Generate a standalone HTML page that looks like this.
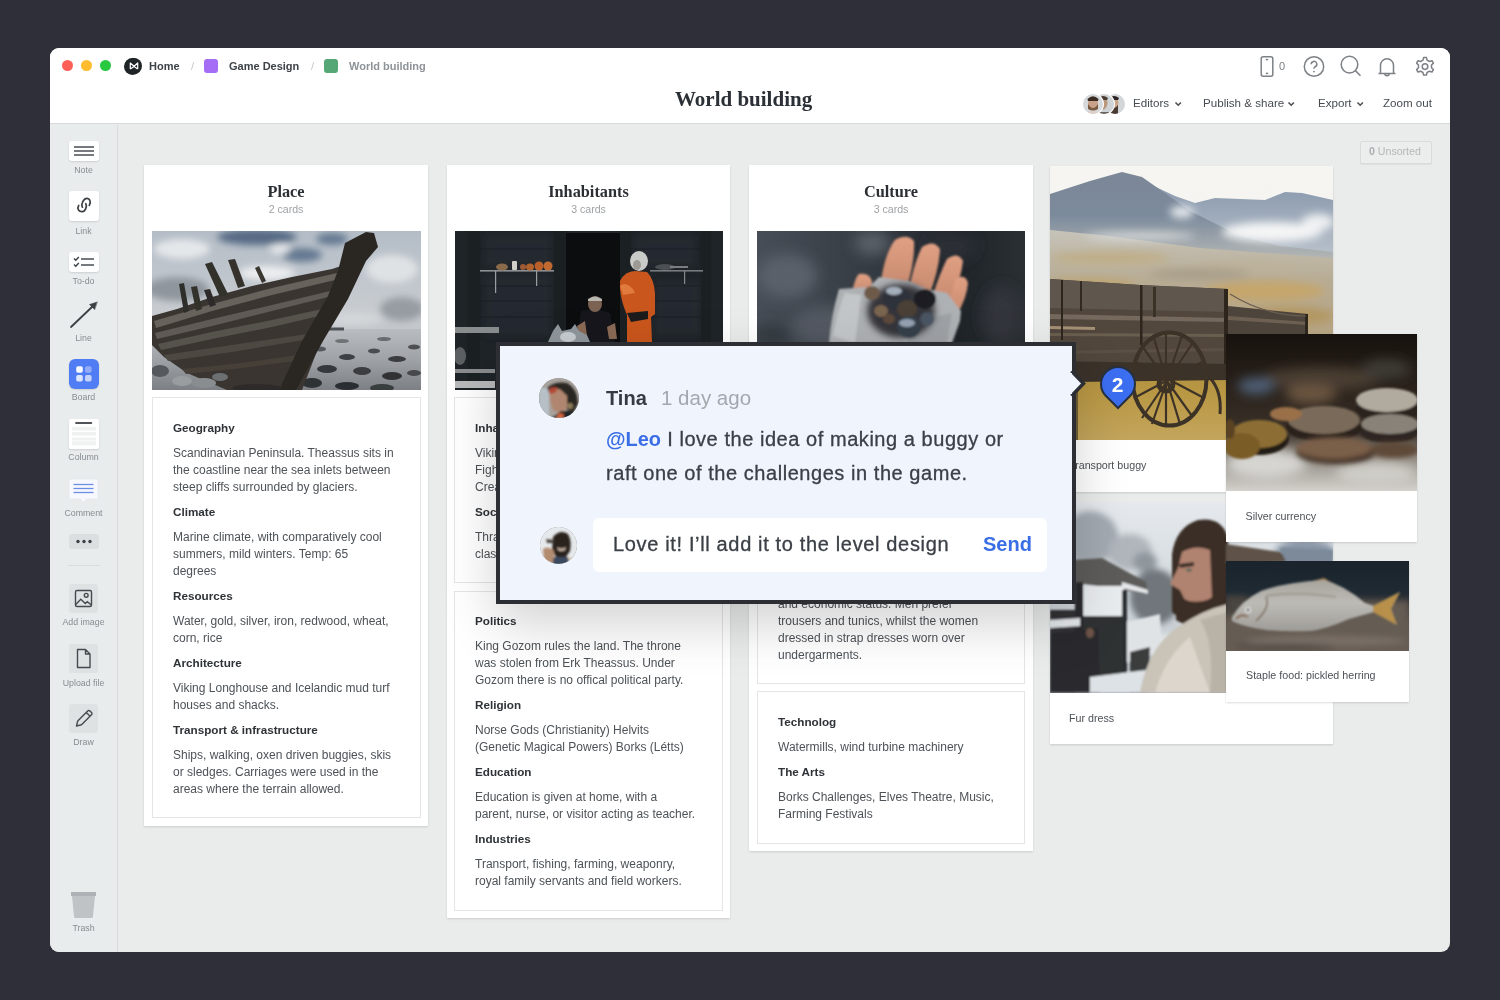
<!DOCTYPE html>
<html><head><meta charset="utf-8">
<style>
*{box-sizing:border-box;margin:0;padding:0}
html,body{width:1500px;height:1000px;overflow:hidden;background:#2e2f38;font-family:"Liberation Sans",sans-serif}
.abs{position:absolute}
#win{position:absolute;left:50px;top:48px;width:1400px;height:904px;border-radius:9px;overflow:hidden;background:#e9eceb}
#hdr{position:absolute;left:0;top:0;width:1400px;height:76px;background:#fff;border-bottom:1px solid #d6d9da}
#side{position:absolute;left:0;top:77px;width:68px;height:827px;background:#e9ecec;border-right:1px solid #d9dcdc}
.crumb{position:absolute;top:12px;font-size:11px;font-weight:700;color:#3d4247;line-height:12px;white-space:nowrap}
.hbtn{position:absolute;top:48px;font-size:11.6px;color:#474c52;line-height:14px;white-space:nowrap}
.lbl{position:absolute;left:0;width:67px;text-align:center;font-size:8.8px;color:#878c91;line-height:10px;white-space:nowrap}
.tile{position:absolute;left:18.5px;width:30px;background:#fff;border-radius:3px;box-shadow:0 1px 2px rgba(0,0,0,.12)}
.gtile{position:absolute;left:19px;width:29px;height:29px;background:#dfe2e3;border-radius:3px}
.col{position:absolute;background:#fff;box-shadow:0 1px 2px rgba(0,0,0,.13)}
.ctitle{position:absolute;left:0;width:100%;text-align:center;font-family:"Liberation Serif",serif;font-weight:700;font-size:16.3px;color:#2b2f33;line-height:18px}
.ccount{position:absolute;left:0;width:100%;text-align:center;font-size:10.6px;color:#9ea2a5;line-height:12px}
.note{position:absolute;background:#fff;border:1px solid #e3e5e6;padding:21px 0 0 20px;overflow:hidden}
.note h4{font-size:11.7px;font-weight:700;color:#2f3337;line-height:17px;margin-bottom:8px;white-space:nowrap}
.note p{position:relative;top:1px;font-size:12px;color:#4d5257;line-height:17px;margin-bottom:8px;white-space:nowrap}
.card{position:absolute;background:#fff;box-shadow:0 1px 2px rgba(0,0,0,.14)}
.cap{position:absolute;font-size:10.7px;color:#4d5257;line-height:12px;white-space:nowrap}
.photo{position:absolute;left:0;top:0;display:block}
</style></head><body>
<div id="root" style="position:absolute;left:0;top:0;width:1500px;height:1000px;will-change:transform">
<div id="win">
  <div id="hdr">
    <!-- traffic lights -->
    <div class="abs" style="left:12px;top:12px;width:11px;height:11px;border-radius:50%;background:#fd5f57"></div>
    <div class="abs" style="left:31px;top:12px;width:11px;height:11px;border-radius:50%;background:#febc2e"></div>
    <div class="abs" style="left:49.5px;top:12px;width:11px;height:11px;border-radius:50%;background:#28c840"></div>
    <!-- breadcrumb -->
    <div class="abs" style="left:74px;top:10px;width:17px;height:17px;border-radius:50%;background:#1f2427"></div>
    <div class="crumb" style="left:99px">Home</div>
    <div class="crumb" style="left:141px;color:#c5c8ca;font-weight:400">/</div>
    <div class="abs" style="left:154px;top:11px;width:14px;height:14px;border-radius:3px;background:#a56cf6"></div>
    <div class="crumb" style="left:179px">Game Design</div>
    <div class="crumb" style="left:261px;color:#c5c8ca;font-weight:400">/</div>
    <div class="abs" style="left:274px;top:11px;width:14px;height:14px;border-radius:3px;background:#55a876"></div>
    <div class="crumb" style="left:299px;color:#8e9397">World building</div>
    <!-- title -->
    <div class="abs" style="left:625px;top:39px;font-family:'Liberation Serif',serif;font-weight:700;font-size:21px;color:#2b3036;line-height:24px;white-space:nowrap">World building</div>
    <!-- right buttons -->
    <div class="hbtn" style="left:1083px">Editors</div>
    <div class="hbtn" style="left:1153px">Publish &amp; share</div>
    <div class="hbtn" style="left:1268px">Export</div>
    <div class="hbtn" style="left:1333px">Zoom out</div>
  </div>
  <div id="side"></div>
  <div id="canvas"></div>
</div>



<!-- ===== HEADER ICONS ===== -->
<svg class="abs" style="left:126px;top:58px" width="16" height="16" viewBox="0 0 16 16"><circle cx="8" cy="8" r="8" fill="#1f2427"/><path d="M4.3 11 V5 L8 8.2 L11.7 5 V11 M4.3 11 L8 8.5 L11.7 11" fill="none" stroke="#fff" stroke-width="1.2" stroke-linejoin="round"/></svg>
<svg class="abs" style="left:1256px;top:54px" width="180" height="26" viewBox="0 0 180 26">
 <g fill="none" stroke="#7d8185" stroke-width="1.5">
  <rect x="5.2" y="2.8" width="11.6" height="19.4" rx="2"/>
  <line x1="9.8" y1="5.6" x2="12.2" y2="5.6"/>
  <line x1="9.8" y1="19.4" x2="12.2" y2="19.4"/>
  <circle cx="58" cy="12.5" r="9.7"/>
  <path d="M55.2 10.2 a2.8 2.8 0 1 1 4 2.5 c-0.9 0.5 -1.2 1 -1.2 2"/>
  <circle cx="93.5" cy="10.6" r="8.3"/>
  <line x1="99.4" y1="16.6" x2="104.5" y2="21.7"/>
  <path d="M124.5 19.5 v-8.2 a6.5 6.5 0 0 1 13 0 v8.2 M122.5 19.5 h17 M128.8 19.5 a2.2 2.2 0 0 0 4.4 0"/>
  <path d="M167.6 3.6 l2.8 0 l0.7 2.6 l2.3 1.3 l2.6 -0.8 l1.4 2.4 l-1.9 1.9 v2.7 l1.9 1.9 l-1.4 2.4 l-2.6 -0.8 l-2.3 1.3 l-0.7 2.6 h-2.8 l-0.7 -2.6 l-2.3 -1.3 l-2.6 0.8 l-1.4 -2.4 l1.9 -1.9 v-2.7 l-1.9 -1.9 l1.4 -2.4 l2.6 0.8 l2.3 -1.3 z" stroke-linejoin="round"/>
  <circle cx="169" cy="12.6" r="2.8"/>
 </g>
 <circle cx="58" cy="17.6" r="0.9" fill="#7d8185"/>
</svg>
<div class="abs" style="left:1279px;top:60px;font-size:11px;color:#7d8185;line-height:12px">0</div>
<!-- avatars -->
<svg class="abs" style="left:1103px;top:92px" width="24" height="24" viewBox="0 0 24 24"><defs><clipPath id="avc3"><circle cx="12" cy="12" r="10"/></clipPath><filter id="avb"><feGaussianBlur stdDeviation="0.6"/></filter></defs><circle cx="12" cy="12" r="11" fill="#fff"/><g clip-path="url(#avc3)"><rect width="24" height="24" fill="#d3d6d8"/><g filter="url(#avb)"><ellipse cx="11" cy="11" rx="4.5" ry="6" fill="#c9a58c"/><path d="M6 6 Q11 2 16 6 L15 8 L7 8 Z" fill="#2a2420"/><path d="M7 13 Q11 19 15 13 L15 22 L7 22 Z" fill="#4a3a30"/></g></g></svg>
<svg class="abs" style="left:1092px;top:92px" width="24" height="24" viewBox="0 0 24 24"><defs><clipPath id="avc2"><circle cx="12" cy="12" r="10"/></clipPath></defs><circle cx="12" cy="12" r="11" fill="#fff"/><g clip-path="url(#avc2)"><rect width="24" height="24" fill="#cfd3d6"/><g filter="url(#avb)"><ellipse cx="11" cy="11" rx="4.5" ry="6.5" fill="#b8977c"/><path d="M6 6 Q11 2 16 6 L15 8 L7 8 Z" fill="#4a3d33"/><path d="M5 20 L17 20 L17 24 L5 24 Z" fill="#6a645c"/></g></g></svg>
<svg class="abs" style="left:1080.5px;top:91.5px" width="24" height="24" viewBox="0 0 24 24"><defs><clipPath id="avc1"><circle cx="12" cy="12" r="10"/></clipPath></defs><circle cx="12" cy="12" r="11" fill="#fff"/><g clip-path="url(#avc1)"><rect width="24" height="24" fill="#d5d9db"/><g filter="url(#avb)"><ellipse cx="12" cy="11.5" rx="5" ry="6.5" fill="#c9a088"/><path d="M6.5 7 Q12 1.5 17.5 7 L17 9 L7 9 Z" fill="#3a2a20"/><path d="M7 12 Q12 20 17 12 L17 17 Q12 20 7 17 Z" fill="#7a5a40"/><path d="M4 21 Q12 17 20 21 L20 24 L4 24 Z" fill="#e0cfc8"/></g></g></svg>
<svg class="abs" style="left:1170px;top:97.5px" width="200" height="12"><g fill="none" stroke="#4a4f54" stroke-width="1.6"><path d="M5.5 4.5 l2.7 2.7 l2.7 -2.7"/><path d="M118.5 4.5 l2.7 2.7 l2.7 -2.7"/><path d="M187.5 4.5 l2.7 2.7 l2.7 -2.7"/></g></svg>
<!-- unsorted -->
<div class="abs" style="left:1360px;top:140.5px;width:72px;height:23px;border:1px solid #d9dcdd;border-radius:2px;background:#eceeee;box-shadow:0 1px 1px rgba(0,0,0,.06)"></div>
<div class="abs" style="left:1369px;top:145px;font-size:10.6px;line-height:12px;color:#b3b7b9;white-space:nowrap"><b style="color:#a9adaf">0</b> Unsorted</div>

<!-- ===== SIDEBAR ===== -->
<div class="tile" style="left:68.5px;top:140.5px;height:20.5px"></div>
<svg class="abs" style="left:68.5px;top:140.5px" width="30" height="21"><g stroke="#3b4045" stroke-width="1.4"><line x1="5" y1="6" x2="25" y2="6"/><line x1="5" y1="10" x2="25" y2="10"/><line x1="5" y1="14" x2="25" y2="14"/></g></svg>
<div class="lbl" style="left:50px;top:165px">Note</div>

<div class="tile" style="left:68.5px;top:191px;height:30px"></div>
<svg class="abs" style="left:68.5px;top:191px" width="30" height="30" viewBox="0 0 30 30"><g fill="none" stroke="#3b4045" stroke-width="1.7" stroke-linecap="round"><path d="M13.4 16.2 C11.8 13 14.5 7.6 17.9 7.4 C20.6 7.3 22.4 10.6 20.3 14.4"/><path d="M16.8 12.7 C18.4 15.2 16.2 20.7 13.3 20.7 C10 20.9 7.6 17.9 9.7 14.5"/></g></svg>
<div class="lbl" style="left:50px;top:226px">Link</div>

<div class="tile" style="left:68.5px;top:252px;height:20px"></div>
<svg class="abs" style="left:68.5px;top:252px" width="30" height="20"><g fill="none" stroke="#3b4045" stroke-width="1.4"><path d="M5 6.5 l1.8 1.8 l3 -3.3"/><path d="M5 12.5 l1.8 1.8 l3 -3.3"/><line x1="12" y1="7" x2="25" y2="7"/><line x1="12" y1="13" x2="25" y2="13"/></g></svg>
<div class="lbl" style="left:50px;top:276px">To-do</div>

<svg class="abs" style="left:66px;top:298px" width="36" height="34"><g stroke="#3b4045" stroke-width="1.8" stroke-linecap="round" fill="#3b4045"><line x1="5" y1="29" x2="27" y2="8"/><path d="M31 4 L23.5 6.5 L28.5 11.5 Z" stroke-width="0.5"/></g></svg>
<div class="lbl" style="left:50px;top:333px">Line</div>

<div class="abs" style="left:69px;top:359px;width:29.5px;height:29.5px;border-radius:6px;background:#507cf4;box-shadow:0 1px 2px rgba(0,0,0,.12)"></div>
<svg class="abs" style="left:69px;top:359px" width="30" height="30"><rect x="7.2" y="7.2" width="6.6" height="6.6" rx="1.8" fill="#f6f9ff"/><rect x="16" y="7.2" width="6.6" height="6.6" rx="1.8" fill="#93abf8"/><rect x="7.2" y="16" width="6.6" height="6.6" rx="1.8" fill="#dde6fd"/><rect x="16" y="16" width="6.6" height="6.6" rx="1.8" fill="#c5d3fb"/></svg>
<div class="lbl" style="left:50px;top:392px">Board</div>

<div class="tile" style="left:69px;top:419px;width:29.5px;height:30px;border-radius:2px"></div>
<svg class="abs" style="left:69px;top:419px" width="30" height="30"><rect x="6.2" y="3" width="17" height="2" rx="0.8" fill="#505458"/><rect x="3" y="8" width="24" height="3.6" fill="#f0f1f1"/><rect x="3" y="13" width="24" height="3.6" fill="#f0f1f1"/><rect x="3" y="18.6" width="24" height="2.8" fill="#f0f1f1"/><rect x="3" y="22.2" width="24" height="4" fill="#f0f1f1"/></svg>
<div class="lbl" style="left:50px;top:452px">Column</div>

<svg class="abs" style="left:67px;top:476px" width="33" height="30"><path d="M3.5 3 h26 a1.5 1.5 0 0 1 1.5 1.5 v17 a1.5 1.5 0 0 1 -1.5 1.5 h-10 l-3 3.5 l-3 -3.5 h-10 a1.5 1.5 0 0 1 -1.5 -1.5 v-17 a1.5 1.5 0 0 1 1.5 -1.5z" fill="#f6f8fd" stroke="#e1e4e8" stroke-width="0.6"/><g stroke="#6d8ee6" stroke-width="1.3"><line x1="6.5" y1="8.5" x2="26.5" y2="8.5"/><line x1="6.5" y1="12.5" x2="26.5" y2="12.5"/><line x1="6.5" y1="16.5" x2="26.5" y2="16.5"/></g></svg>
<div class="lbl" style="left:50px;top:508px">Comment</div>

<div class="abs" style="left:68.5px;top:533.5px;width:30px;height:15px;border-radius:3px;background:#dcdfe0"></div>
<svg class="abs" style="left:68.5px;top:533.5px" width="30" height="15"><g fill="#3b4045"><circle cx="9" cy="7.5" r="1.7"/><circle cx="15" cy="7.5" r="1.7"/><circle cx="21" cy="7.5" r="1.7"/></g></svg>

<div class="abs" style="left:68px;top:565px;width:32px;height:1px;background:#dadddd"></div>

<div class="gtile" style="left:69px;top:583.5px"></div>
<svg class="abs" style="left:69px;top:583.5px" width="29" height="29"><g fill="none" stroke="#454a4f" stroke-width="1.4"><rect x="6.5" y="6.5" width="16" height="16" rx="1.5"/><circle cx="17.2" cy="11.3" r="1.9"/><path d="M6.8 20.5 l5 -5.2 l4.5 4.2 l2 -1.8 l4 3.3"/></g></svg>
<div class="lbl" style="left:50px;top:617px">Add image</div>

<div class="gtile" style="left:69px;top:643.5px"></div>
<svg class="abs" style="left:69px;top:643.5px" width="29" height="29"><path d="M8.5 5.5 h8 l4.5 4.5 v13.5 h-12.5 z M16.5 5.5 v4.5 h4.5" fill="none" stroke="#454a4f" stroke-width="1.4" stroke-linejoin="round"/></svg>
<div class="lbl" style="left:50px;top:678px">Upload file</div>

<div class="gtile" style="left:69px;top:704px"></div>
<svg class="abs" style="left:69px;top:704px" width="29" height="29"><path d="M7.5 22 l1.2 -5 l10 -10 a1.6 1.6 0 0 1 2.3 0 l1.5 1.5 a1.6 1.6 0 0 1 0 2.3 l-10 10 z M17.3 8.5 l3.5 3.5" fill="none" stroke="#454a4f" stroke-width="1.4" stroke-linejoin="round"/></svg>
<div class="lbl" style="left:50px;top:737px">Draw</div>

<svg class="abs" style="left:69px;top:890px" width="29" height="29"><path d="M2 2 h25 v4 h-25z" fill="#aeb2b5"/><path d="M3 6 h23 l-2 20.5 a1.5 1.5 0 0 1 -1.5 1.5 h-16 a1.5 1.5 0 0 1 -1.5 -1.5z" fill="#bfc3c6"/></svg>
<div class="lbl" style="left:50px;top:923px">Trash</div>

<!-- ===== COLUMNS ===== -->
<div class="col" style="left:144px;top:165px;width:284px;height:661px">
  <div class="ctitle" style="top:17.5px">Place</div>
  <div class="ccount" style="top:37.5px">2 cards</div>
</div>
<div class="col" style="left:447px;top:165px;width:283px;height:753px">
  <div class="ctitle" style="top:17.5px">Inhabitants</div>
  <div class="ccount" style="top:37.5px">3 cards</div>
</div>
<div class="col" style="left:749px;top:165px;width:284px;height:686px">
  <div class="ctitle" style="top:17.5px">Culture</div>
  <div class="ccount" style="top:37.5px">3 cards</div>
</div>

<div id="img-place" class="abs" style="left:152px;top:231px;width:269px;height:159px;background:#777"><svg width="269" height="159" viewBox="0 0 269 159" style="display:block">
<defs>
<linearGradient id="pSky" x1="0" y1="0" x2="0" y2="1"><stop offset="0" stop-color="#b4bdc7"/><stop offset="0.5" stop-color="#c8ccd0"/><stop offset="1" stop-color="#b3b7bb"/></linearGradient>
<linearGradient id="pSea" x1="0" y1="0" x2="0" y2="1"><stop offset="0" stop-color="#b9bdc1"/><stop offset="0.5" stop-color="#9fa3a7"/><stop offset="1" stop-color="#7c8084"/></linearGradient>
<filter id="pB1" x="-30%" y="-30%" width="160%" height="160%"><feGaussianBlur stdDeviation="3.5"/></filter>
<filter id="pB2"><feGaussianBlur stdDeviation="0.7"/></filter>
</defs>
<rect width="269" height="159" fill="url(#pSky)"/>
<g filter="url(#pB1)">
 <ellipse cx="105" cy="6" rx="40" ry="8" fill="#566a84"/>
 <ellipse cx="150" cy="24" rx="20" ry="7" fill="#647891"/>
 <ellipse cx="180" cy="8" rx="16" ry="6" fill="#647891"/>
 <ellipse cx="128" cy="18" rx="10" ry="5" fill="#e8ebee"/>
 <ellipse cx="30" cy="18" rx="28" ry="10" fill="#e4e7ea"/>
 <ellipse cx="115" cy="42" rx="28" ry="7" fill="#eceef0"/>
 <ellipse cx="240" cy="38" rx="26" ry="14" fill="#dfe2e5"/>
 <ellipse cx="25" cy="58" rx="32" ry="12" fill="#8f969d"/>
 <ellipse cx="250" cy="78" rx="22" ry="12" fill="#969ca2"/>
 <ellipse cx="200" cy="88" rx="30" ry="6" fill="#d4d7da"/>
</g>
<rect x="0" y="98" width="269" height="61" fill="url(#pSea)"/>
<rect x="172" y="96.5" width="20" height="3" fill="#4f5356"/>
<g filter="url(#pB2)">
 <ellipse cx="168" cy="118" rx="6" ry="2.5" fill="#55585b"/>
 <ellipse cx="195" cy="126" rx="8" ry="3" fill="#3d4044"/>
 <ellipse cx="222" cy="120" rx="6" ry="2.5" fill="#4a4d50"/>
 <ellipse cx="245" cy="128" rx="9" ry="3" fill="#3a3d40"/>
 <ellipse cx="262" cy="116" rx="6" ry="2.5" fill="#4d5053"/>
 <ellipse cx="175" cy="138" rx="10" ry="4" fill="#36393c"/>
 <ellipse cx="210" cy="140" rx="9" ry="4" fill="#3b3e41"/>
 <ellipse cx="240" cy="145" rx="10" ry="4" fill="#303336"/>
 <ellipse cx="262" cy="142" rx="7" ry="3" fill="#45484b"/>
 <ellipse cx="160" cy="152" rx="10" ry="5" fill="#2f3235"/>
 <ellipse cx="195" cy="155" rx="12" ry="4" fill="#2c2f31"/>
 <ellipse cx="230" cy="157" rx="12" ry="4" fill="#393c3e"/>
 <ellipse cx="155" cy="130" rx="5" ry="2" fill="#4a4d50"/>
 <ellipse cx="232" cy="108" rx="7" ry="2" fill="#6a6d70"/>
 <ellipse cx="190" cy="110" rx="7" ry="2" fill="#707376"/>
</g>
<!-- hull -->
<g filter="url(#pB2)">
 <path d="M0 85 L25 78 L60 66 L100 55 L140 46 L180 38 L198 32 L206 40 L190 75 L165 120 L150 159 L75 159 L35 142 L12 126 L0 114 Z" fill="#3a3632"/>
 <path d="M2 90 L60 73 L120 57 L185 42 L183 49 L120 64 L60 80 L4 97 Z" fill="#67625c"/>
 <path d="M3 102 L60 88 L120 74 L178 60 L176 66 L120 80 L60 95 L5 108 Z" fill="#5f5a55"/>
 <path d="M6 113 L60 101 L120 89 L170 78 L167 85 L120 96 L60 108 L9 119 Z" fill="#57524d"/>
 <path d="M12 124 L80 114 L155 103 L152 109 L80 121 L16 130 Z" fill="#4d4843"/>
 <path d="M30 138 L90 132 L145 124 L143 130 L90 137 L34 143 Z" fill="#463f39"/>
 <!-- ribs -->
 <path d="M27 53 L32 52 L37 80 L32 82 Z" fill="#2f2d2a"/>
 <path d="M39 56 L45 55 L50 78 L44 80 Z" fill="#33302c"/>
 <path d="M52 59 L58 58 L64 74 L58 76 Z" fill="#2f2c29"/>
 <path d="M53 33 L60 31 L76 63 L68 66 Z" fill="#33302c"/>
 <path d="M76 29 L83 28 L93 55 L86 57 Z" fill="#35322e"/>
 <path d="M103 37 L107 35 L114 50 L110 52 Z" fill="#3a3733"/>
 <!-- bow post -->
 <path d="M193 12 L214 1 L222 2 L226 16 L214 30 L196 68 L171 110 L144 159 L127 159 L150 110 L176 65 L186 40 Z" fill="#2a2724"/>
</g>
<g filter="url(#pB2)">
 <ellipse cx="30" cy="150" rx="10" ry="5" fill="#9a9da0"/>
 <ellipse cx="52" cy="152" rx="12" ry="5" fill="#8a8d90"/>
 <ellipse cx="68" cy="146" rx="8" ry="4" fill="#6d7073"/>
 <ellipse cx="8" cy="140" rx="9" ry="6" fill="#55585b"/>
 <ellipse cx="105" cy="157" rx="25" ry="4" fill="#2e2c2a"/>
</g>
</svg>
</div>
<div id="img-inhab" class="abs" style="left:455px;top:231px;width:268px;height:159px;background:#222"><svg width="268" height="159" viewBox="0 0 268 159" style="display:block">
<defs>
<filter id="iB1"><feGaussianBlur stdDeviation="0.7"/></filter>
<filter id="iB2" x="-30%" y="-30%" width="160%" height="160%"><feGaussianBlur stdDeviation="3"/></filter>
</defs>
<rect width="268" height="159" fill="#1e2428"/>
<g filter="url(#iB2)" opacity="0.8">
 <rect x="30" y="5" width="65" height="30" fill="#262c31"/>
 <rect x="30" y="45" width="65" height="60" fill="#252b30"/>
 <rect x="180" y="5" width="60" height="30" fill="#262c31"/>
 <rect x="200" y="50" width="45" height="55" fill="#262c30"/>
</g>
<g stroke="#1a1f22" stroke-width="1.2" opacity="0.9">
 <line x1="25" y1="18" x2="98" y2="18"/><line x1="25" y1="55" x2="98" y2="55"/><line x1="25" y1="70" x2="98" y2="70"/><line x1="25" y1="86" x2="98" y2="86"/>
 <line x1="176" y1="18" x2="246" y2="18"/><line x1="196" y1="55" x2="246" y2="55"/><line x1="196" y1="70" x2="246" y2="70"/><line x1="196" y1="86" x2="246" y2="86"/>
</g>
<rect x="12" y="0" width="13" height="159" fill="#1b2023"/>
<rect x="99" y="0" width="12" height="111" fill="#1a1f22"/>
<rect x="165" y="0" width="11" height="111" fill="#1b2023"/>
<rect x="246" y="0" width="10" height="111" fill="#1b2023"/>
<rect x="111" y="2" width="54" height="109" fill="#0b0d0f"/>
<!-- shelves -->
<rect x="25" y="39" width="74" height="1.6" fill="#8d9194"/>
<rect x="40" y="40" width="1.2" height="22" fill="#9a9ea1"/>
<rect x="81" y="40" width="1.2" height="15" fill="#9a9ea1"/>
<rect x="195" y="39" width="53" height="1.6" fill="#777b7e"/>
<rect x="229" y="40" width="1.2" height="13" fill="#85898c"/>
<g filter="url(#iB1)">
 <ellipse cx="47" cy="36" rx="6" ry="3.5" fill="#8b6a4c"/>
 <rect x="57" y="30" width="5" height="9" rx="1" fill="#cfcfc8"/>
 <ellipse cx="68" cy="36" rx="3" ry="3" fill="#9c5a36"/>
 <ellipse cx="75" cy="36" rx="4" ry="3.5" fill="#b0622e"/>
 <ellipse cx="84" cy="35" rx="4.5" ry="4.5" fill="#b85f2a"/>
 <ellipse cx="93" cy="35" rx="4.5" ry="4.5" fill="#c06a32"/>
 <ellipse cx="210" cy="36" rx="10" ry="3" fill="#4a4f53"/>
 <rect x="215" y="35" width="18" height="2" fill="#7b7f82"/>
</g>
<!-- table bottom left -->
<rect x="0" y="96" width="44" height="6" fill="#8a8d8e" filter="url(#iB1)"/>
<rect x="0" y="138" width="40" height="4" fill="#8a8c8d" filter="url(#iB1)"/>
<rect x="0" y="150" width="40" height="7" fill="#b8babb" filter="url(#iB1)"/>
<ellipse cx="5" cy="125" rx="6" ry="9" fill="#5d6164" filter="url(#iB1)"/>
<!-- man sitting -->
<g filter="url(#iB1)">
 <path d="M126 80 Q140 76 155 82 L160 111 L122 111 Z" fill="#15181a"/>
 <ellipse cx="140" cy="73" rx="7" ry="8" fill="#7b6253"/>
 <path d="M133 68 Q140 63 147 68 L147 70 L133 70 Z" fill="#b9b6b0"/>
 <path d="M122 95 L130 90 L132 105 L125 108 Z" fill="#8a6a55"/>
 <path d="M152 96 L160 92 L162 108 L154 108 Z" fill="#8a6a55"/>
 <!-- dog -->
 <path d="M93 111 L98 100 L103 93 L107 100 L116 98 L120 93 L124 100 L132 104 L135 111 Z" fill="#8f969c"/>
 <ellipse cx="113" cy="106" rx="8" ry="5" fill="#c7ccd0"/>
 <!-- orange figure -->
 <path d="M165 50 Q170 40 180 40 L192 41 Q199 48 200 62 L200 83 L196 86 L197 111 L172 111 L172 84 Q166 70 165 58 Z" fill="#c9561f"/>
 <path d="M165 55 Q170 50 178 58 L180 62 L168 64 Z" fill="#e07a3c"/>
 <ellipse cx="184" cy="30" rx="9" ry="10" fill="#c9cbc9"/>
 <ellipse cx="182" cy="34" rx="4" ry="5" fill="#9d9a94"/>
 <path d="M172 82 L193 80 L193 88 L176 91 Z" fill="#1b1d1f"/>
</g>
</svg>
</div>
<div id="img-cult" class="abs" style="left:757px;top:231px;width:268px;height:159px;background:#333"><svg width="268" height="159" viewBox="0 0 268 159" style="display:block">
<defs>
<linearGradient id="cBg" x1="0" y1="0" x2="1" y2="0"><stop offset="0" stop-color="#474e57"/><stop offset="0.45" stop-color="#343a42"/><stop offset="0.75" stop-color="#1f2429"/><stop offset="1" stop-color="#2a2f34"/></linearGradient>
<filter id="cB1" x="-50%" y="-50%" width="200%" height="200%"><feGaussianBlur stdDeviation="7"/></filter>
<filter id="cB3" x="-30%" y="-30%" width="160%" height="160%"><feGaussianBlur stdDeviation="3"/></filter>
<filter id="cB2"><feGaussianBlur stdDeviation="0.9"/></filter>
<linearGradient id="cSkin" x1="0" y1="0" x2="0" y2="1"><stop offset="0" stop-color="#e0a084"/><stop offset="1" stop-color="#c78a6e"/></linearGradient>
</defs>
<rect width="268" height="159" fill="url(#cBg)"/>
<g filter="url(#cB1)">
 <ellipse cx="30" cy="45" rx="30" ry="22" fill="#5a616a"/>
 <ellipse cx="65" cy="95" rx="30" ry="20" fill="#525962"/>
 <ellipse cx="15" cy="105" rx="20" ry="12" fill="#343a41"/>
 <ellipse cx="115" cy="12" rx="18" ry="12" fill="#5a6066"/>
 <ellipse cx="195" cy="15" rx="25" ry="15" fill="#2a2f34"/>
 <ellipse cx="245" cy="85" rx="20" ry="30" fill="#30353a"/>
</g>
<g filter="url(#cB2)">
 <!-- fingers -->
 <path d="M124 50 Q128 22 138 9 Q150 2 157 10 Q158 30 150 56 Z" fill="url(#cSkin)"/>
 <path d="M152 58 Q157 32 165 16 Q177 8 183 18 Q182 40 172 64 Z" fill="url(#cSkin)"/>
 <path d="M176 64 Q182 44 190 28 Q201 20 206 30 Q204 50 192 72 Z" fill="url(#cSkin)"/>
 <path d="M190 80 Q194 62 199 48 Q208 42 211 52 Q210 66 200 84 Z" fill="url(#cSkin)"/>
 <path d="M95 62 Q98 46 102 43 Q112 41 115 50 L114 62 Z" fill="url(#cSkin)"/>
 <!-- glove -->
 <path d="M72 112 Q74 85 82 58 L112 56 L122 46 L152 50 L170 58 L190 62 L204 80 L203 90 L195 112 Z" fill="#aeb1b4"/>
 <path d="M76 105 Q82 75 88 62 L104 64 L98 112 Z" fill="#c3c6c9"/>
 <path d="M160 90 L195 82 L190 112 L150 112 Z" fill="#9ea2a6"/>
 <!-- stones -->
 <ellipse cx="144" cy="80" rx="34" ry="27" fill="#34363b" filter="url(#cB3)"/>
 <ellipse cx="115" cy="62" rx="8" ry="7" fill="#6e5a48"/>
 <ellipse cx="124" cy="80" rx="7" ry="6" fill="#7a6550"/>
 <ellipse cx="140" cy="68" rx="14" ry="11" fill="#2d333b"/>
 <ellipse cx="137" cy="60" rx="8" ry="4" fill="#a4afbc"/>
 <ellipse cx="150" cy="78" rx="10" ry="9" fill="#4c3f36"/>
 <ellipse cx="168" cy="68" rx="11" ry="10" fill="#1a1e23"/>
 <ellipse cx="152" cy="96" rx="12" ry="11" fill="#36404c"/>
 <ellipse cx="150" cy="92" rx="8" ry="4" fill="#94a2b2"/>
 <ellipse cx="170" cy="88" rx="7" ry="7" fill="#4a5462"/>
 <ellipse cx="132" cy="88" rx="6" ry="5" fill="#5d4a3a"/>
</g>
</svg>
</div>

<div class="note" style="left:152px;top:397px;width:269px;height:421px">
  <h4>Geography</h4>
  <p>Scandinavian Peninsula. Theassus sits in<br>the coastline near the sea inlets between<br>steep cliffs surrounded by glaciers.</p>
  <h4>Climate</h4>
  <p>Marine climate, with comparatively cool<br>summers, mild winters. Temp: 65<br>degrees</p>
  <h4>Resources</h4>
  <p>Water, gold, silver, iron, redwood, wheat,<br>corn, rice</p>
  <h4>Architecture</h4>
  <p>Viking Longhouse and Icelandic mud turf<br>houses and shacks.</p>
  <h4>Transport &amp; infrastructure</h4>
  <p>Ships, walking, oxen driven buggies, skis<br>or sledges. Carriages were used in the<br>areas where the terrain allowed.</p>
</div>
<div class="note" style="left:454px;top:397px;width:269px;height:186px">
  <h4>Inhabitants</h4>
  <p>Vikings, Seafarers, Traders<br>Fighters, Raiders, Explorers<br>Creatures and Elves</p>
  <h4>Social classes</h4>
  <p>Thralls, Karls and Jarls form the social<br>classes of the land</p>
</div>
<div class="note" style="left:454px;top:591px;width:269px;height:320px;padding-top:20px">
  <h4>Politics</h4>
  <p>King Gozom rules the land. The throne<br>was stolen from Erk Theassus. Under<br>Gozom there is no offical political party.</p>
  <h4>Religion</h4>
  <p>Norse Gods (Christianity) Helvits<br>(Genetic Magical Powers) Borks (Létts)</p>
  <h4>Education</h4>
  <p>Education is given at home, with a<br>parent, nurse, or visitor acting as teacher.</p>
  <h4>Industries</h4>
  <p>Transport, fishing, farming, weaponry,<br>royal family servants and field workers.</p>
</div>
<div class="note" style="left:757px;top:397px;width:268px;height:287px;padding-top:20px">
  <h4>Clothing</h4>
  <p>Clothing was made from wool, linen and<br>animal skins, with furs for warmth.</p>
  <h4>Fashion</h4>
  <p>Dress is determined by social class<br>and wealth. Jewellery shows rank<br>and social standing, along with<br>furs, textiles and embroidery that<br>signalled a certain wealth, class<br>and economic status. Men prefer<br>trousers and tunics, whilst the women<br>dressed in strap dresses worn over<br>undergarments.</p>
</div>
<div class="note" style="left:757px;top:691px;width:268px;height:153px">
  <h4>Technolog</h4>
  <p>Watermills, wind turbine machinery</p>
  <h4>The Arts</h4>
  <p>Borks Challenges, Elves Theatre, Music,<br>Farming Festivals</p>
</div>


<!-- ===== RIGHT CARDS ===== -->
<div class="card" style="left:1050px;top:166px;width:283px;height:326px">
  <div id="img-buggy" class="abs" style="left:0;top:0;width:283px;height:274px;background:#a99"><svg width="283" height="274" viewBox="0 0 283 274" style="display:block">
<defs>
<linearGradient id="bSky" x1="0" y1="0" x2="0" y2="1"><stop offset="0" stop-color="#f6f5f1"/><stop offset="1" stop-color="#eef0f0"/></linearGradient>
<linearGradient id="bM1" x1="0" y1="0" x2="0" y2="1"><stop offset="0" stop-color="#7c8797"/><stop offset="0.5" stop-color="#7b8a9c"/><stop offset="1" stop-color="#b3b6b4"/></linearGradient>
<linearGradient id="bM2" x1="0" y1="0" x2="0" y2="1"><stop offset="0" stop-color="#8797ac"/><stop offset="1" stop-color="#b7c0ca"/></linearGradient>
<linearGradient id="bValley" x1="0" y1="0" x2="0" y2="1"><stop offset="0" stop-color="#c8c6be"/><stop offset="0.25" stop-color="#b8ad96"/><stop offset="0.6" stop-color="#b39f7a"/><stop offset="1" stop-color="#a89270"/></linearGradient>
<linearGradient id="bGrass" x1="0" y1="0" x2="0" y2="1"><stop offset="0" stop-color="#a98a3c"/><stop offset="0.5" stop-color="#b99844"/><stop offset="1" stop-color="#c3a55c"/></linearGradient>
<filter id="bB1" x="-30%" y="-30%" width="160%" height="160%"><feGaussianBlur stdDeviation="4"/></filter>
<filter id="bB2"><feGaussianBlur stdDeviation="0.7"/></filter>
</defs>
<rect width="283" height="274" fill="url(#bSky)"/>
<rect x="0" y="58" width="283" height="216" fill="url(#bValley)"/>
<g filter="url(#bB1)">
 <ellipse cx="60" cy="92" rx="60" ry="6" fill="#bfae86"/>
 <ellipse cx="40" cy="120" rx="45" ry="7" fill="#c0a46e"/>
 <ellipse cx="150" cy="108" rx="50" ry="5" fill="#a69c88"/>
 <ellipse cx="215" cy="125" rx="60" ry="10" fill="#c5a66c"/>
 <ellipse cx="240" cy="150" rx="45" ry="9" fill="#b39762"/>
 <ellipse cx="120" cy="140" rx="50" ry="6" fill="#ad9a78"/>
 <ellipse cx="200" cy="100" rx="50" ry="4" fill="#bdb29a"/>
</g>
<path d="M95 16 L125 30 L145 37 L165 32 L190 33 L215 34 L235 26 L252 27 L283 34 L283 88 L230 80 L170 66 L120 44 Z" fill="url(#bM2)"/>
<path d="M0 28 L40 15 L72 6 L92 11 L112 25 L140 45 L190 70 L230 80 L283 86 L283 92 L150 82 L60 70 L0 64 Z" fill="url(#bM1)"/>
<g filter="url(#bB1)">
 <ellipse cx="222" cy="66" rx="50" ry="10" fill="#f4f5f5"/>
 <ellipse cx="132" cy="46" rx="12" ry="6" fill="#e8ebee"/>
 <ellipse cx="268" cy="56" rx="16" ry="8" fill="#eef0f2"/>
 <ellipse cx="90" cy="70" rx="55" ry="4" fill="#d5d8d8"/>
</g>
<rect x="0" y="180" width="283" height="94" fill="url(#bGrass)"/>
<g filter="url(#bB2)">
 <!-- wagon box -->
 <path d="M0 113 L90 119 L178 123 L178 212 L30 212 L0 205 Z" fill="#51473e"/>
 <path d="M0 113 L90 119 L178 123 L178 146 L0 142 Z" fill="#5e564e"/>
 <path d="M0 148 L178 152 L178 156 L0 153 Z" fill="#74685b"/>
 <path d="M0 160 L45 161 L45 164 L0 163 Z" fill="#a58f74"/>
 <path d="M0 167 L178 168 L178 171 L0 170 Z" fill="#6a5e50"/>
 <path d="M0 185 L178 182 L178 185 L0 188 Z" fill="#5c5045"/>
 <path d="M178 140 L258 148 L256 212 L178 212 Z" fill="#4e443b"/>
 <path d="M178 150 L258 156 L258 159 L178 154 Z" fill="#6d6153"/>
 <rect x="11" y="114" width="2" height="60" fill="#2f271f"/>
 <rect x="30" y="115" width="2" height="30" fill="#332a22"/>
 <rect x="90" y="119" width="2.5" height="60" fill="#2f271f"/>
 <rect x="103" y="121" width="3" height="30" fill="#3a3027"/>
 <rect x="174" y="123" width="4" height="90" fill="#2f271f"/>
 <rect x="255" y="148" width="3" height="60" fill="#2f271f"/>
 <path d="M0 195 L178 198 L178 214 L25 216 L0 212 Z" fill="#3b322a"/>
 <path d="M0 205 L28 210 L28 274 L0 274 Z" fill="#6e5c34"/>
</g>
<g fill="none" stroke="#3d3128" filter="url(#bB2)">
 <ellipse cx="119.5" cy="213" rx="37" ry="46.5" stroke-width="4"/>
 <circle cx="116" cy="218" r="7" stroke-width="5"/>
 <g stroke-width="2.2">
  <line x1="116" y1="167" x2="116" y2="259"/><line x1="83" y1="213" x2="156" y2="213"/>
  <line x1="92" y1="180" x2="142" y2="250"/><line x1="142" y1="178" x2="92" y2="252"/>
  <line x1="103" y1="169" x2="130" y2="258"/><line x1="132" y1="170" x2="102" y2="258"/>
  <line x1="84" y1="195" x2="154" y2="232"/><line x1="84" y1="232" x2="154" y2="195"/>
 </g>
 <path d="M160 212 Q172 225 170 248" stroke-width="3"/>
</g>
<path d="M180 128 Q215 150 256 150" fill="none" stroke="#6a5d50" stroke-width="1.2"/>
</svg>
</div>
  <div class="cap" style="left:19px;top:293px">Transport buggy</div>
</div>
<div class="card" style="left:1050px;top:502px;width:283px;height:241.5px">
  <div id="img-fur" class="abs" style="left:0;top:0;width:283px;height:190.5px;background:#889"><svg width="283" height="190.5" viewBox="0 0 283 190.5" style="display:block">
<defs>
<linearGradient id="fSky" x1="0" y1="0" x2="0" y2="1"><stop offset="0" stop-color="#e6eaee"/><stop offset="0.45" stop-color="#d3d9de"/><stop offset="1" stop-color="#b9c0c6"/></linearGradient>
<filter id="fB1" x="-30%" y="-30%" width="160%" height="160%"><feGaussianBlur stdDeviation="3"/></filter>
<filter id="fB2"><feGaussianBlur stdDeviation="0.9"/></filter>
</defs>
<rect width="283" height="190.5" fill="url(#fSky)"/>
<g filter="url(#fB1)">
 <ellipse cx="40" cy="35" rx="28" ry="26" fill="#a3aab1"/>
 <ellipse cx="80" cy="50" rx="22" ry="18" fill="#b0b6bc"/>
 <ellipse cx="105" cy="95" rx="25" ry="28" fill="#6f767c"/>
 <ellipse cx="18" cy="70" rx="18" ry="12" fill="#98a0a6"/>
 <ellipse cx="95" cy="60" rx="12" ry="10" fill="#8f969c"/>
 <ellipse cx="255" cy="50" rx="30" ry="12" fill="#8795a5"/>
 <ellipse cx="110" cy="140" rx="18" ry="8" fill="#e4e8eb"/>
</g>
<g filter="url(#fB2)">
 <!-- hut -->
 <path d="M22 58 L52 56 L96 80 L98 92 L22 80 Z" fill="#5d5c5a"/>
 <path d="M72 80 L98 88 L98 92 L72 86 Z" fill="#e5e8ea"/>
 <rect x="34" y="84" width="40" height="30" fill="#e9ecee"/>
 <rect x="25" y="80" width="8" height="100" fill="#2a2c2e"/>
 <rect x="72" y="88" width="5" height="92" fill="#2c2e30"/>
 <rect x="33" y="114" width="40" height="66" fill="#2f3133"/>
 <path d="M0 108 L25 108 L25 190.5 L0 190.5 Z" fill="#303335"/>
 <path d="M0 118 L30 116 L30 124 L0 126 Z" fill="#e3e7ea"/>
 <path d="M0 132 L48 126 L50 190.5 L0 190.5 Z" fill="#2a2c2d"/>
 <ellipse cx="40" cy="131" rx="4" ry="5" fill="#6e5448"/>
 <path d="M77 120 L110 112 L112 150 L77 160 Z" fill="#dfe3e6"/>
 <path d="M80 150 L100 145 L98 190.5 L80 190.5 Z" fill="#3a3c3d"/>
 <path d="M40 175 L120 165 L120 190.5 L40 190.5 Z" fill="#dde2e6"/>
 <!-- hair back -->
 <path d="M122 52 Q126 25 148 18 Q172 14 178 36 L178 128 L140 125 L122 110 Z" fill="#3a2f28"/>
 <path d="M176 42 L230 50 L240 60 L176 62 Z" fill="#5e5248"/>
 <path d="M230 46 L283 48 L283 60 L236 60 Z" fill="#7c8a9a"/>
 <!-- face -->
 <path d="M132 50 Q146 42 160 48 L162 95 Q150 106 136 100 L130 88 L120 82 L124 74 L128 66 Z" fill="#b08270"/>
 <path d="M129 62 L144 60 L144 64 L130 66 Z" fill="#3e3029"/>
 <ellipse cx="139" cy="68" rx="3" ry="1.5" fill="#5a6b5c"/>
 <!-- beard -->
 <path d="M126 90 Q138 106 162 96 L170 120 L148 130 L126 118 Z" fill="#3b2d25"/>
 <!-- fur coat -->
 <path d="M90 190.5 Q98 145 128 125 Q152 108 178 102 L178 190.5 Z" fill="#c9c3b8"/>
 <path d="M105 190.5 Q115 155 140 135 L160 190.5 Z" fill="#dcd6cc"/>
 <path d="M150 118 Q165 140 160 190.5 L178 190.5 L178 110 Z" fill="#b9b2a6"/>
</g>
</svg>
</div>
  <div class="cap" style="left:19px;top:210px">Fur dress</div>
</div>
<div class="card" style="left:1226px;top:334px;width:191px;height:207.5px">
  <div id="img-coins" class="abs" style="left:0;top:0;width:191px;height:157px;background:#443"><svg width="191" height="157" viewBox="0 0 191 157" style="display:block">
<defs>
<linearGradient id="kBg" x1="0" y1="0" x2="0" y2="1"><stop offset="0" stop-color="#17120e"/><stop offset="0.35" stop-color="#2a221b"/><stop offset="0.62" stop-color="#3a3129"/><stop offset="0.78" stop-color="#8d877e"/><stop offset="1" stop-color="#d4d2cd"/></linearGradient>
<filter id="kB1" x="-50%" y="-50%" width="200%" height="200%"><feGaussianBlur stdDeviation="6"/></filter>
<filter id="kB2" x="-20%" y="-20%" width="140%" height="140%"><feGaussianBlur stdDeviation="1.2"/></filter>
<filter id="kB3" x="-30%" y="-30%" width="160%" height="160%"><feGaussianBlur stdDeviation="2.5"/></filter>
</defs>
<rect width="191" height="157" fill="url(#kBg)"/>
<g filter="url(#kB1)">
 <ellipse cx="95" cy="45" rx="60" ry="12" fill="#4a3e33"/>
 <ellipse cx="30" cy="52" rx="18" ry="8" fill="#50627a"/>
 <ellipse cx="85" cy="60" rx="25" ry="10" fill="#6a5540"/>
 <ellipse cx="160" cy="35" rx="25" ry="10" fill="#3e3a36"/>
 <ellipse cx="40" cy="130" rx="40" ry="15" fill="#d6d5d2"/>
 <ellipse cx="150" cy="140" rx="40" ry="12" fill="#cfcdc8"/>
</g>
<g filter="url(#kB2)">
 <ellipse cx="162" cy="75" rx="32" ry="14" fill="#2a231d"/>
 <ellipse cx="161" cy="66" rx="31" ry="12" fill="#b0aa9f"/>
 <ellipse cx="163" cy="97" rx="30" ry="12" fill="#2e2620"/>
 <ellipse cx="164" cy="90" rx="29" ry="10" fill="#888278"/>
 <ellipse cx="98" cy="93" rx="38" ry="15" fill="#2b221b"/>
 <ellipse cx="98" cy="86" rx="36" ry="14" fill="#7a6b5a"/>
 <ellipse cx="60" cy="80" rx="16" ry="7" fill="#9a7048"/>
 <ellipse cx="33" cy="105" rx="30" ry="16" fill="#231a12"/>
 <ellipse cx="33" cy="100" rx="28" ry="14" fill="#8c6e36"/>
 <ellipse cx="16" cy="112" rx="18" ry="13" fill="#7a5c28"/>
 <ellipse cx="4" cy="95" rx="5" ry="10" fill="#5a4320"/>
</g>
<g filter="url(#kB3)">
 <ellipse cx="110" cy="118" rx="40" ry="12" fill="#3a2c20"/>
 <ellipse cx="108" cy="114" rx="38" ry="11" fill="#7a5e48"/>
 <ellipse cx="168" cy="116" rx="25" ry="8" fill="#5e4a38"/>
</g>
</svg>
</div>
  <div class="cap" style="left:19.5px;top:176px">Silver currency</div>
</div>
<div class="card" style="left:1226px;top:561px;width:183px;height:141px">
  <div id="img-fish" class="abs" style="left:0;top:0;width:183px;height:90px;background:#345"><svg width="183" height="90" viewBox="0 0 183 90" style="display:block">
<defs>
<linearGradient id="hBg" x1="0" y1="0" x2="0" y2="1"><stop offset="0" stop-color="#1a232b"/><stop offset="0.35" stop-color="#1f2a33"/><stop offset="0.5" stop-color="#3c3a38"/><stop offset="0.7" stop-color="#5e5750"/><stop offset="1" stop-color="#6a6058"/></linearGradient>
<linearGradient id="hFish" x1="0" y1="0" x2="0" y2="1"><stop offset="0" stop-color="#a7a49d"/><stop offset="0.45" stop-color="#bdbbb6"/><stop offset="1" stop-color="#9e9c98"/></linearGradient>
<filter id="hB1"><feGaussianBlur stdDeviation="0.8"/></filter>
<filter id="hB2" x="-20%" y="-20%" width="140%" height="140%"><feGaussianBlur stdDeviation="3"/></filter>
</defs>
<rect width="183" height="90" fill="url(#hBg)"/>
<g filter="url(#hB2)">
 <rect x="0" y="40" width="183" height="50" fill="#655b53"/>
 <rect x="0" y="35" width="20" height="20" fill="#4a4540"/>
 <ellipse cx="100" cy="80" rx="80" ry="5" fill="#7a7068"/>
 <ellipse cx="60" cy="86" rx="50" ry="3" fill="#4e4640"/>
</g>
<g filter="url(#hB1)">
 <path d="M79 22 L98 17 L116 28 Z" fill="#a98450"/>
 <path d="M6 56 Q15 40 35 30 Q60 21 98 19 Q118 24 139 42 L148 45 L174 31 L165 48 L171 64 L148 51 L123 58 Q100 68 85 70 Q60 71 40 69 Q18 66 6 60 Z" fill="url(#hFish)"/>
 <path d="M147 45 L174 31 L165 48 L171 64 L147 51 Z" fill="#b8904a"/>
 <path d="M40 35 Q70 30 110 36" stroke="#8f8a82" stroke-width="2" fill="none" opacity="0.6"/>
 <path d="M30 60 Q45 46 40 36" stroke="#7a6a5a" stroke-width="1.5" fill="none"/>
 <path d="M10 58 Q15 52 22 56" stroke="#8a6a52" stroke-width="2" fill="none"/>
 <circle cx="22" cy="49" r="3" fill="#e8eaea"/>
 <circle cx="22" cy="49" r="1.4" fill="#1e1e1e"/>
</g>
</svg>
</div>
  <div class="cap" style="left:20px;top:108px">Staple food: pickled herring</div>
</div>
<!-- marker -->
<div class="abs" style="left:1099.5px;top:366px;width:36px;height:36px;border-radius:50% 50% 0 50%;transform:rotate(45deg);background:#3b6ef0;border:2.5px solid #253041"></div>
<div class="abs" style="left:1099.5px;top:371.5px;width:36px;text-align:center;font-size:21px;font-weight:700;color:#fff;line-height:26px">2</div>

<!-- ===== POPUP ===== -->
<div class="abs" style="left:496px;top:342px;width:580px;height:262px;box-shadow:0 20px 50px rgba(0,0,0,.18)"></div>
<div class="abs" style="left:496px;top:342px;width:580px;height:262px;background:#f0f4fc;border:4px solid #2c2e33"></div>
<svg class="abs" style="left:1070px;top:370px" width="18" height="27"><path d="M1.5 1 L13.5 13.5 L1.5 26" fill="#f0f4fc" stroke="#2c2e33" stroke-width="3.5"/><rect x="0" y="3" width="2" height="21" fill="#f0f4fc"/></svg>
<div id="av-tina" class="abs" style="left:539px;top:378px;width:40px;height:40px;border-radius:50%;background:#999;overflow:hidden"><svg width="40" height="40" viewBox="0 0 40 40" style="display:block">
<defs><filter id="tB"><feGaussianBlur stdDeviation="1.1"/></filter></defs>
<rect width="40" height="40" fill="#a8a29d"/>
<g filter="url(#tB)">
 <rect x="0" y="10" width="10" height="30" fill="#b7c0c6"/>
 <path d="M8 10 Q16 3 28 5 Q38 10 39 25 L34 36 L26 30 L28 18 L20 12 L10 14 Z" fill="#2b2724"/>
 <path d="M11 13 Q16 9 22 12 L28 18 L28 30 L22 36 L14 32 L11 22 Z" fill="#b1866f"/>
 <path d="M10 11 Q14 8 19 10 L16 15 L10 16 Z" fill="#b34a34"/>
 <path d="M16 38 L22 33 L30 33 L40 40 L12 40 Z" fill="#1f2226"/>
 <path d="M17 40 L20 35 L25 36 L24 40 Z" fill="#d4633a"/>
 <ellipse cx="31" cy="28" rx="3" ry="3" fill="#8c7a5a"/>
</g>
</svg>
</div>
<div class="abs" style="left:606px;top:386px;font-size:20px;font-weight:700;color:#363b41;line-height:24px;white-space:nowrap">Tina</div>
<div class="abs" style="left:661px;top:386px;font-size:20.5px;color:#a3a8ad;line-height:24px;white-space:nowrap">1 day ago</div>
<div class="abs" style="left:606px;top:422px;font-size:20px;color:#3b4047;line-height:34px;white-space:nowrap;letter-spacing:0.55px;-webkit-text-stroke:0.3px #3b4047"><b style="color:#3a6ee6;letter-spacing:0;-webkit-text-stroke:0">@Leo</b> I love the idea of making a buggy or<br>raft one of the challenges in the game.</div>
<div id="av-leo" class="abs" style="left:539.5px;top:527px;width:37px;height:37px;border-radius:50%;background:#777;overflow:hidden"><svg width="38" height="38" viewBox="0 0 38 38" style="display:block">
<defs><filter id="lB"><feGaussianBlur stdDeviation="1"/></filter></defs>
<rect width="38" height="38" fill="#e6e9eb"/>
<g filter="url(#lB)">
 <path d="M13 10 Q20 2 28 7 Q32 14 30 24 L26 30 L17 31 L12 24 Z" fill="#2c241f"/>
 <path d="M17 20 Q21 23 26 20 L25 23 Q21 25 18 23 Z" fill="#c9b7a8"/>
 <path d="M3 22 Q8 18 14 24 L14 36 L4 36 Z" fill="#b38c70"/>
 <path d="M14 30 L28 30 L30 38 L12 38 Z" fill="#3b4a5e"/>
 <path d="M28 30 L36 32 L38 38 L30 38 Z" fill="#d7c2a8"/>
 <path d="M6 12 L14 13 L13 16 L7 16 Z" fill="#4a4440"/>
</g>
</svg>
</div>
<div class="abs" style="left:593px;top:518px;width:454px;height:54px;background:#fff;border-radius:6px"></div>
<div class="abs" style="left:613px;top:532px;font-size:20px;color:#3b4047;line-height:24px;white-space:nowrap;letter-spacing:0.65px;-webkit-text-stroke:0.3px #3b4047">Love it! I’ll add it to the level design</div>
<div class="abs" style="left:983px;top:532px;font-size:20px;font-weight:700;color:#3a6ee6;line-height:24px;white-space:nowrap">Send</div>

</div>
</body></html>
